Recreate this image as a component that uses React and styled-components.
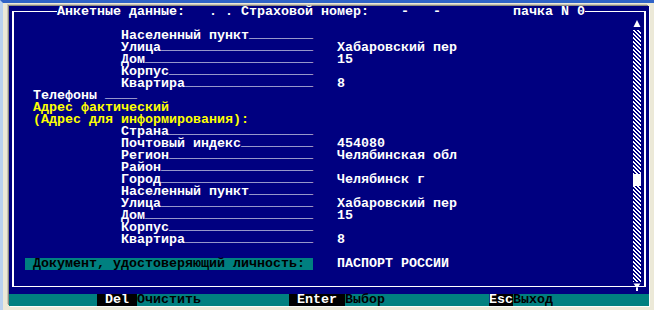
import React from 'react';
import styled, { createGlobalStyle } from 'styled-components';

const NAVY = '#000080';
const TEAL = '#008080';
const tones = { white: '#ffffff', yellow: '#ffff00', black: '#000000' };

const Global = createGlobalStyle`
  html, body { margin: 0; padding: 0; background: #ece9d8; }
  body { width: 654px; height: 310px; overflow: hidden; }
`;

const line = (x, y, w, h) =>
  `linear-gradient(#fff, #fff) ${x}px ${y}px / ${w}px ${h}px no-repeat`;

const Screen = styled.div`
  box-sizing: border-box;
  width: 654px;
  height: 310px;
  background: #ece9d8;
  border-top: 3px solid #2f63c7;
  border-left: 3px solid #b9d1ef;
  padding: 3px 5px 4px 6px;
`;

const Console = styled.div`
  width: 640px;
  height: 300px;
  display: grid;
  grid-template-columns: repeat(80, 8px);
  grid-template-rows: repeat(25, 12px);
  background: ${line(3, 5, 634, 1)}, ${line(3, 5, 2, 276)},
    ${line(635, 5, 2, 276)}, ${line(3, 280, 634, 1)}, ${NAVY};
  font-family: "Liberation Mono", "DejaVu Sans Mono", monospace;
  font-weight: 700;
  font-size: 13.333px;
  line-height: 12px;
  white-space: pre;
  color: #fff;
  box-shadow: -1px -1px 0 #8e8c80, -2px -2px 0 #c9c6b8, 1px 1px 0 #fdfdfb;
`;

const Cell = styled.div`
  ${(p) => (p.$row != null ? `grid-row: ${p.$row + 1};` : '')}
  grid-column: ${(p) => p.$col + 1} / span ${(p) => p.$span};
  min-width: 0;
  overflow: visible;
`;

const Text = styled(Cell)`
  color: ${(p) => tones[p.$tone || 'white']};
`;

const HeaderText = styled(Cell)`
  background: ${NAVY};
  color: #fff;
`;

const Fill = styled.span`
  vertical-align: 2px;
  line-height: 0;
`;

const DocBar = styled(Cell)`
  background: ${TEAL};
  color: #000;
  padding-left: 8px;
`;

const ArrowCell = styled(Cell)`
  display: flex;
`;

const Track = styled.div`
  grid-row: 3 / span 21;
  grid-column: 79;
  display: flex;
  flex-direction: column;
  background: repeating-linear-gradient(
    45deg,
    #ffffff 0 1.414px,
    ${NAVY} 1.414px 2.828px
  );
`;

const TrackGap = styled.div`
  flex: none;
`;

const Thumb = styled.div`
  height: 12px;
  flex: none;
  background: #fff;
`;

const StatusBar = styled.div`
  grid-row: 25;
  grid-column: 1 / -1;
  display: grid;
  grid-template-columns: repeat(80, 8px);
  background: ${TEAL};
  color: #000;
`;

const Key = styled(Cell)`
  background: #000;
  color: #fff;
`;

const Hint = styled(Cell)`
  color: #000;
`;

function Field({ row, label, value }) {
  return (
    <>
      <Text $row={row} $col={14} $span={24}>
        {label}
        <Fill>{'_'.repeat(24 - label.length)}</Fill>
      </Text>
      {value ? (
        <Text $row={row} $col={41} $span={value.length}>
          {value}
        </Text>
      ) : null}
    </>
  );
}

const fields1 = [
  [2, 'Населенный пункт', ''],
  [3, 'Улица', 'Хабаровский пер'],
  [4, 'Дом', '15'],
  [5, 'Корпус', ''],
  [6, 'Квартира', '8'],
];

const fields2 = [
  [10, 'Страна', ''],
  [11, 'Почтовый индекс', '454080'],
  [12, 'Регион', 'Челябинская обл'],
  [13, 'Район', ''],
  [14, 'Город', 'Челябинск г'],
  [15, 'Населенный пункт', ''],
  [16, 'Улица', 'Хабаровский пер'],
  [17, 'Дом', '15'],
  [18, 'Корпус', ''],
  [19, 'Квартира', '8'],
];

const header =
  'Анкетные данные:   . . Страховой номер:    -   -         пачка N 0';

const thumbRow = 14;

export default function App() {
  return (
    <>
      <Global />
      <Screen>
        <Console>
          <HeaderText $row={0} $col={6} $span={header.length}>
            {header}
          </HeaderText>

          {fields1.map(([r, l, v]) => (
            <Field key={'a' + r} row={r} label={l} value={v} />
          ))}

          <Text $row={7} $col={3} $span={13}>
            {'Телефоны '}
            <Fill>{'____'}</Fill>
          </Text>
          <Text $row={8} $col={3} $span={17} $tone="yellow">
            Адрес фактический
          </Text>
          <Text $row={9} $col={3} $span={27} $tone="yellow">
            (Адрес для информирования):
          </Text>

          {fields2.map(([r, l, v]) => (
            <Field key={'b' + r} row={r} label={l} value={v} />
          ))}

          <DocBar $row={21} $col={2} $span={36}>
            Документ, удостоверяющий личность:
          </DocBar>
          <Text $row={21} $col={41} $span={14}>
            ПАСПОРТ РОССИИ
          </Text>

          <ArrowCell $row={1} $col={78} $span={1}>
            <svg width="8" height="12" viewBox="0 0 8 12">
              <polygon points="4,2 7.5,9 0.5,9" fill="#fff" />
            </svg>
          </ArrowCell>
          <Track>
            <TrackGap style={{ height: (thumbRow - 2) * 12 }} />
            <Thumb />
          </Track>
          <ArrowCell $row={23} $col={78} $span={1}>
            <svg width="8" height="12" viewBox="0 0 8 12">
              <polygon points="0.5,1.5 7.5,1.5 4,6.5" fill="#fff" />
              <rect x="3" y="6" width="2" height="3" fill="#fff" />
            </svg>
          </ArrowCell>

          <StatusBar>
            <Key $col={11} $span={5}>{' Del '}</Key>
            <Hint $col={16} $span={8}>Очистить</Hint>
            <Key $col={35} $span={7}>{' Enter '}</Key>
            <Hint $col={42} $span={5}>Выбор</Hint>
            <Key $col={60} $span={3}>Esc</Key>
            <Hint $col={63} $span={5}>Выход</Hint>
          </StatusBar>
        </Console>
      </Screen>
    </>
  );
}
